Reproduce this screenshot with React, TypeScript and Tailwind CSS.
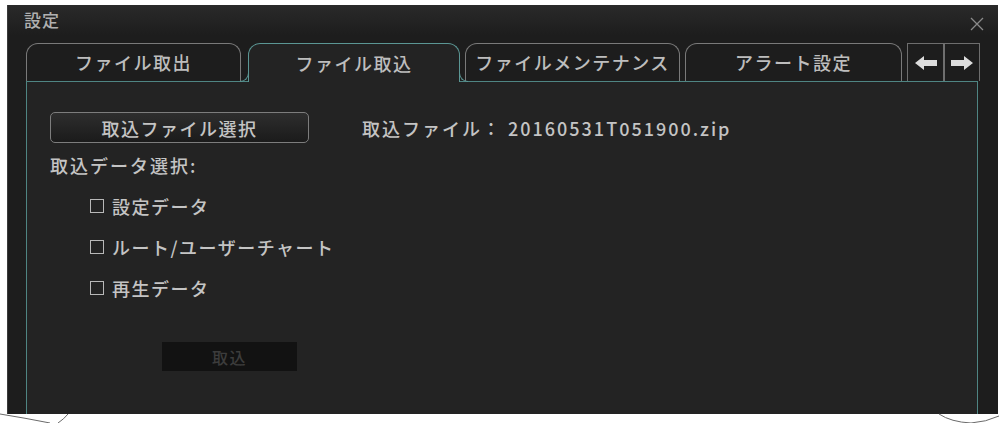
import clsx from "clsx"

const font = { fontFamily: '"Noto Sans CJK JP", "Noto Sans", sans-serif' }

const Tab = ({ label, width, active }: { label: string; width: string; active?: boolean }) => {
  return (
    <div
      className={clsx(
        "relative flex items-center justify-center rounded-t-[12px] border-t border-l border-r text-[18px] font-medium tracking-[1.5px] text-[#bdbdbd]",
        width,
        active ? "z-10 -mb-px h-[39px] border-[#5b9694] bg-[#232323]" : "h-[38px] border-[#7a7a7a]"
      )}
    >
      {active && (
        <>
          <span className="absolute bottom-0 left-[-9px] h-[9px] w-[9px] rounded-br-[9px] border-r border-b border-[#5b9694]" />
          <span className="absolute bottom-0 right-[-9px] h-[9px] w-[9px] rounded-bl-[9px] border-l border-b border-[#5b9694]" />
        </>
      )}
      {label}
    </div>
  )
}

const ArrowBox = ({ dir, width }: { dir: "left" | "right"; width: string }) => {
  return (
    <div className={clsx("flex h-[38px] items-center justify-center border-t border-l border-r border-[#6e6e6e]", width)}>
      <svg width="24" height="16" viewBox="0 0 24 16">
        {dir === "left" ? (
          <path d="M1 8 L10 1 L10 5 L23 5 L23 11 L10 11 L10 15 Z" fill="#dcdcdc" />
        ) : (
          <path d="M23 8 L14 1 L14 5 L1 5 L1 11 L14 11 L14 15 Z" fill="#dcdcdc" />
        )}
      </svg>
    </div>
  )
}

const Check = ({ label }: { label: string }) => {
  return (
    <div className="ml-[40px] mt-[17px] flex h-[24px] items-center gap-[8px]">
      <span className="h-[14px] w-[14px] border border-[#b8b8b8]" />
      <span>{label}</span>
    </div>
  )
}

export default function App() {
  return (
    <div className="relative h-[423px] w-[1001px] overflow-hidden bg-white" style={font}>
      <div className="ml-[7px] mt-[5px] flex h-[409px] w-[991px] flex-col border-l border-[#3a3a3a] bg-[#1d1d1d]">
        {/* title bar */}
        <div className="flex h-[30px] items-start justify-between bg-gradient-to-b from-[#2a2a2a] to-[#1d1d1d] pl-[16px] pr-[14px]">
          <span className="pt-[5px] text-[17px] font-medium leading-[20px] tracking-[1px] text-[#b0b0b0]">設定</span>
          <svg className="mt-[12px]" width="14" height="14" viewBox="0 0 14 14">
            <path d="M1 1 L13 13 M13 1 L1 13" stroke="#8a8a8a" strokeWidth="1.3" />
          </svg>
        </div>

        {/* tabs */}
        <div className="mt-[8px] flex items-end pl-[18px]">
          <Tab label="ファイル取出" width="w-[215px]" />
          <div className="ml-[7px]">
            <Tab label="ファイル取込" width="w-[212px]" active />
          </div>
          <div className="ml-[5px]">
            <Tab label="ファイルメンテナンス" width="w-[215px]" />
          </div>
          <div className="ml-[5px]">
            <Tab label="アラート設定" width="w-[217px]" />
          </div>
          <div className="ml-[5px] flex">
            <ArrowBox dir="left" width="w-[37px]" />
            <ArrowBox dir="right" width="w-[36px]" />
          </div>
        </div>

        {/* content */}
        <div className="ml-[18px] mr-[20px] flex flex-1 flex-col border-t border-l border-r border-[#4f8583] bg-[#232323] pl-[23px] text-[18px] font-medium leading-[24px] tracking-[1.5px] text-[#c4c4c4]">
          <div className="mt-[30px] flex items-center">
            <button className="flex h-[31px] w-[259px] items-center justify-center rounded-[5px] border border-[#7d7d7d] bg-gradient-to-b from-[#2e2e2e] to-[#1b1b1b] text-[18px] font-medium tracking-[1.5px] text-[#c4c4c4]">
              取込ファイル選択
            </button>
            <span className="ml-[53px] tracking-[2px]">取込ファイル： 20160531T051900.zip</span>
          </div>
          <div className="mt-[10px] tracking-[2px]">取込データ選択:</div>
          <Check label="設定データ" />
          <Check label="ルート/ユーザーチャート" />
          <Check label="再生データ" />
          <div className="ml-[112px] mt-[42px] flex h-[29px] w-[135px] items-center justify-center bg-[#121212] text-[16px] text-[#3c3c3c]">
            取込
          </div>
        </div>
      </div>

      {/* page curl strokes below the panel */}
      <svg className="absolute bottom-0 left-0" width="80" height="10" viewBox="0 0 80 10">
        <path d="M0 1 Q25 5 50 10" stroke="#6a6a6a" strokeWidth="1" fill="none" />
        <path d="M58 10 Q64 6 68 1" stroke="#6a6a6a" strokeWidth="1" fill="none" />
      </svg>
      <svg className="absolute bottom-0 right-0" width="70" height="10" viewBox="0 0 70 10">
        <path d="M8 1 Q20 9 40 10 Q55 9 68 3" stroke="#6a6a6a" strokeWidth="1" fill="none" />
      </svg>
    </div>
  )
}
